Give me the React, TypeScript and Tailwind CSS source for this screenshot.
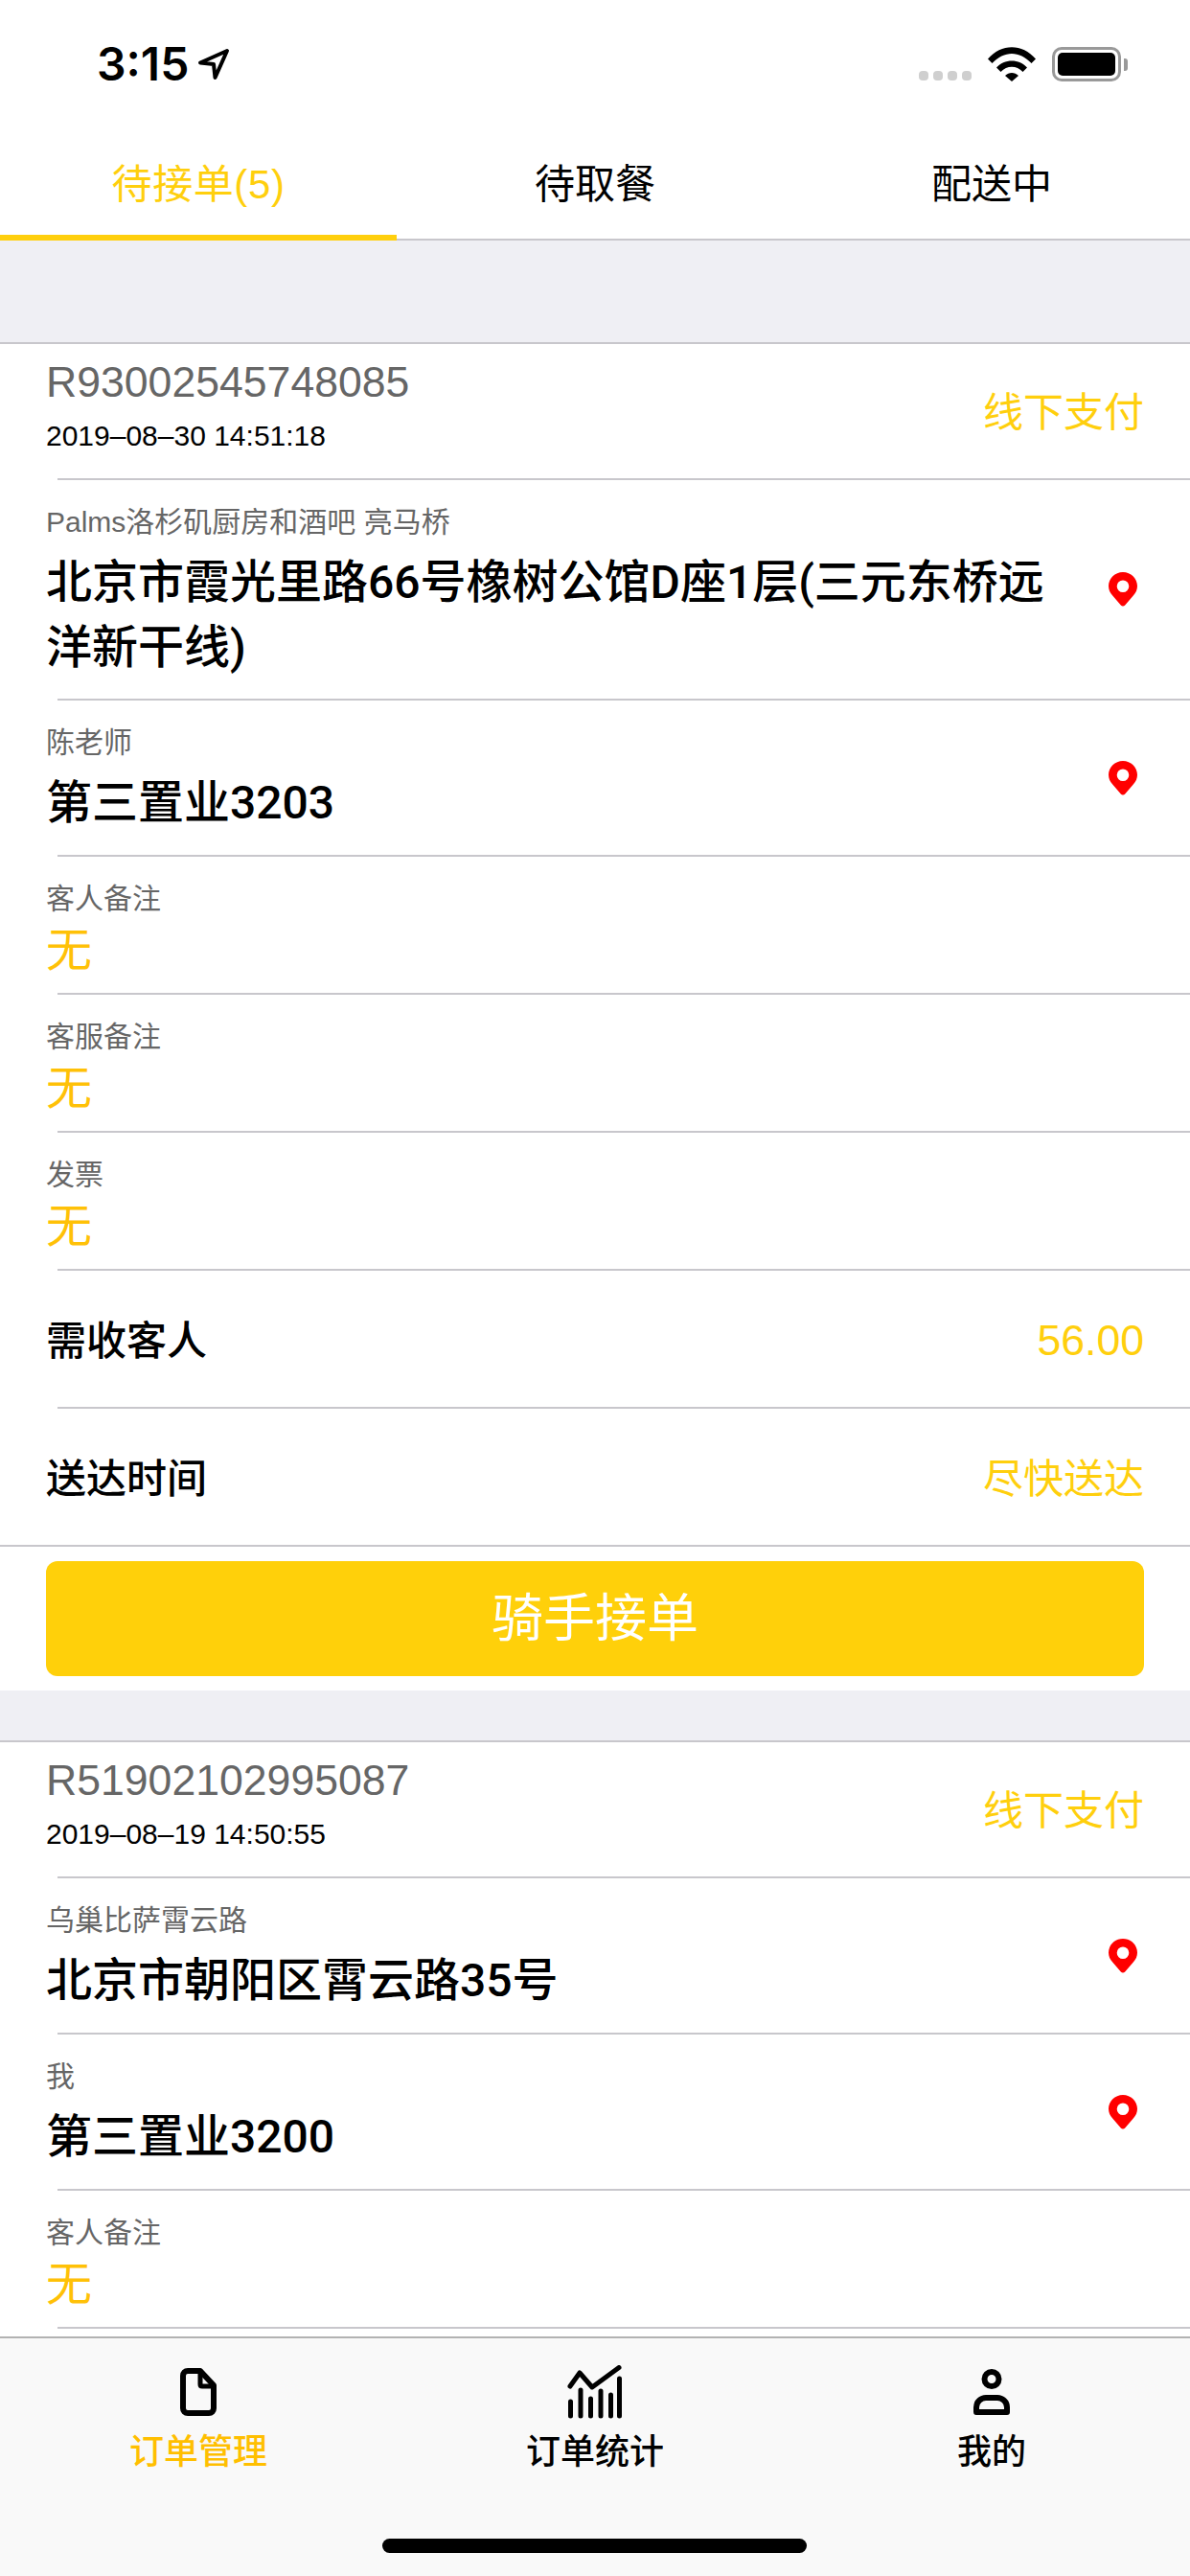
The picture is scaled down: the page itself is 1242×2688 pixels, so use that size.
function Pin() {
  return (
    <svg width="30" height="36" viewBox="0 0 30 36" className="shrink-0">
      <path fillRule="evenodd" fill="#ff0000" d="M15 0C6.7 0 0 6.5 0 14.6c0 3.9 1.6 7.2 4.2 10L12.8 34.400c1.200 1.300 3.200 1.300 4.400 0L25.800 24.600c2.600-2.800 4.200-6.100 4.200-10C30 6.500 23.300 0 15 0ZM15 8.500a6.300 6.300 0 1 1 0 12.600a6.300 6.300 0 0 1 0-12.600Z" />
    </svg>
  );
}

function Divider({ full }: { full?: boolean }) {
  return <div className={full ? "h-[2px] bg-[#c8c7cc]" : "ml-[60px] h-[2px] bg-[#c8c7cc]"} />;
}

function Header({ id, date }: { id: string; date: string }) {
  return (
    <div className="flex h-[140px] items-center justify-between pl-[48px] pr-[48px]">
      <div className="mb-[14px] flex flex-col">
        <div className="h-[56px] text-[44.6px] leading-[56px] text-[#666666]">{id}</div>
        <div className="mt-[10px] h-[36px] text-[30px] leading-[36px] text-black">{date}</div>
      </div>
      <div className="pt-[2px] text-[42px] text-[#ffcf0d]">线下支付</div>
    </div>
  );
}

function Address({ label, text, h }: { label: string; text: string; h: string }) {
  return (
    <div className={`${h} flex items-center justify-between pl-[48px] pr-[55px]`}>
      <div className="h-full w-[1050px]">
        <div className="mt-[24px] h-[40px] text-[30px] leading-[40px] text-[#666666]">{label}</div>
        <div
          className="mt-[9px] text-[48px] font-medium leading-[68px] text-black"
          style={{ fontFamily: 'Roboto, "Noto Sans CJK SC", sans-serif' }}
        >
          {text}
        </div>
      </div>
      <Pin />
    </div>
  );
}

function Note({ label }: { label: string }) {
  return (
    <div className="h-[142px] pl-[48px]">
      <div className="pt-[24px] text-[30px] leading-[40px] text-[#666666]">{label}</div>
      <div className="mt-[6px] text-[48px] leading-[56px] text-[#ffc107]">无</div>
    </div>
  );
}

function Line({ label, value, valueClass }: { label: string; value: string; valueClass: string }) {
  return (
    <div className="flex h-[142px] items-center justify-between pl-[48px] pr-[48px] pt-[5px]">
      <div className="text-[42px] font-medium text-black">{label}</div>
      <div className={valueClass}>{value}</div>
    </div>
  );
}

function Tab({ text, active }: { text: string; active?: boolean }) {
  return (
    <div
      className={
        active
          ? "flex h-[107px] w-[414px] items-center justify-center border-b-[6px] border-[#ffcf0d] pb-[4px] text-[42px] tracking-[0.6px] text-[#ffcf0d]"
          : "flex h-[107px] w-[414px] items-center justify-center border-b-[2px] border-[#c8c7cc] pb-[8px] text-[42px] text-black"
      }
    >
      {text}
    </div>
  );
}

function FileIcon() {
  return (
    <svg width="38" height="50" viewBox="0 0 38 50" fill="none" stroke="#000" strokeWidth="6" strokeLinejoin="round">
      <path d="M8 3h13l14 15v24c0 3-2 5-5 5H8c-3 0-5-2-5-5V8c0-3 2-5 5-5Z" />
      <path d="M21 4v13c0 1 .5 2 2 2h11" strokeWidth="5" />
    </svg>
  );
}

function ChartIcon() {
  return (
    <svg width="58" height="56" viewBox="0 0 58 56" fill="none" stroke="#000" strokeWidth="5" strokeLinecap="round" strokeLinejoin="round">
      <path d="M3 22L13 8l13 15L54 2.500" />
      <path d="M3.500 38v15M14 26v27M24.500 35v18M35 27v26M45.500 31v22M54.500 14v39" />
    </svg>
  );
}

function PersonIcon() {
  return (
    <svg width="38" height="48" viewBox="0 0 38 48" fill="none" stroke="#000" strokeWidth="6">
      <circle cx="19" cy="10.500" r="7.500" />
      <path d="M3 45v-5c0-6 5-10 10-10h12c5 0 10 4 10 10v5Z" strokeLinejoin="round" />
    </svg>
  );
}

function NavItem({ icon, text, color }: { icon: React.ReactNode; text: string; color: string }) {
  return (
    <div className="flex w-[414px] flex-col items-center">
      <div className="flex h-[60px] items-center">{icon}</div>
      <div className={`mt-[9px] h-[48px] text-[36px] font-medium leading-[48px] ${color}`}>{text}</div>
    </div>
  );
}

export default function App() {
  return (
    <div
      className="flex h-[2688px] w-[1242px] flex-col overflow-hidden bg-white"
      style={{ fontFamily: '"Liberation Sans", "Noto Sans CJK SC", sans-serif' }}
    >
      {/* status bar */}
      <div className="flex h-[144px] shrink-0 items-start justify-between pl-[101px] pr-[65px] pt-[42px]">
        <div className="flex items-center gap-[9px]">
          <span className="text-[48px] font-semibold leading-[50px] text-black" style={{ fontFamily: "Inter, sans-serif" }}>3:15</span>
          <svg width="34" height="34" viewBox="0 0 34 34" fill="none" stroke="#000" strokeWidth="4" strokeLinejoin="round">
            <path d="M31 3L3 15.500l14 1.500 1.500 14L31 3Z" />
          </svg>
        </div>
        <div className="flex items-end gap-[17px] pt-[7px]">
          <div className="mb-[1px] flex gap-[5px]">
            <span className="h-[10px] w-[10px] rounded-[4px] bg-[#cfcfcf]" />
            <span className="h-[10px] w-[10px] rounded-[4px] bg-[#cfcfcf]" />
            <span className="h-[10px] w-[10px] rounded-[4px] bg-[#cfcfcf]" />
            <span className="h-[10px] w-[10px] rounded-[4px] bg-[#cfcfcf]" />
          </div>
          <svg width="50" height="36" viewBox="0 0 50 36" fill="#000">
            <path d="M0 12.500C14-4 36-4 50 12.500l-4.500 4.500C33 3.500 17 3.500 4.500 17Z" />
            <path d="M9 21.500C17 12 33 12 41 21.500l-4.500 4.500C30 19 20 19 13.500 26Z" />
            <path d="M18 30c4-4 10-4 14 0l-7 6Z" />
          </svg>
          <div className="flex items-center">
            <div className="flex h-[36px] w-[72px] rounded-[10px] border-[3px] border-[#999999] p-[3px]">
              <div className="flex-1 rounded-[5px] bg-black" />
            </div>
            <div className="ml-[3px] h-[13px] w-[4px] rounded-r-[3px] bg-[#999999]" />
          </div>
        </div>
      </div>

      {/* tabs */}
      <div className="flex shrink-0 items-end">
        <Tab text="待接单(5)" active />
        <Tab text="待取餐" />
        <Tab text="配送中" />
      </div>

      {/* list */}
      <div className="min-h-0 flex-1 overflow-hidden bg-[#efeff4]">
        <div className="h-[106px]" />
        <Divider full />
        <div className="bg-white">
          <Header id="R93002545748085" date="2019–08–30 14:51:18" />
          <Divider />
          <Address h="h-[228px]" label="Palms洛杉矶厨房和酒吧 亮马桥" text="北京市霞光里路66号橡树公馆D座1层(三元东桥远洋新干线)" />
          <Divider />
          <Address h="h-[161px]" label="陈老师" text="第三置业3203" />
          <Divider />
          <Note label="客人备注" />
          <Divider />
          <Note label="客服备注" />
          <Divider />
          <Note label="发票" />
          <Divider />
          <Line label="需收客人" value="56.00" valueClass="text-[44.6px] text-[#ffcf0d]" />
          <Divider />
          <Line label="送达时间" value="尽快送达" valueClass="text-[42px] text-[#ffcf0d]" />
          <Divider full />
          <div className="px-[48px] py-[15px]">
            <div className="flex h-[120px] items-center justify-center rounded-[12px] bg-[#ffd00a] text-[54px] text-white">
              骑手接单
            </div>
          </div>
        </div>
        <div className="h-[52px]" />
        <Divider full />
        <div className="bg-white">
          <Header id="R51902102995087" date="2019–08–19 14:50:55" />
          <Divider />
          <Address h="h-[161px]" label="乌巢比萨霄云路" text="北京市朝阳区霄云路35号" />
          <Divider />
          <Address h="h-[161px]" label="我" text="第三置业3200" />
          <Divider />
          <Note label="客人备注" />
          <Divider />
          <div className="h-[40px]" />
        </div>
      </div>

      {/* bottom nav */}
      <div className="relative h-[250px] shrink-0 border-t-[2px] border-[#b2b2b2] bg-[#f9f9f9]">
        <div className="flex pt-[26px]">
          <NavItem icon={<FileIcon />} text="订单管理" color="text-[#ffbf00]" />
          <NavItem icon={<ChartIcon />} text="订单统计" color="text-black" />
          <NavItem icon={<PersonIcon />} text="我的" color="text-black" />
        </div>
        <div className="absolute bottom-[24px] left-[399px] h-[15px] w-[443px] rounded-full bg-black" />
      </div>
    </div>
  );
}
